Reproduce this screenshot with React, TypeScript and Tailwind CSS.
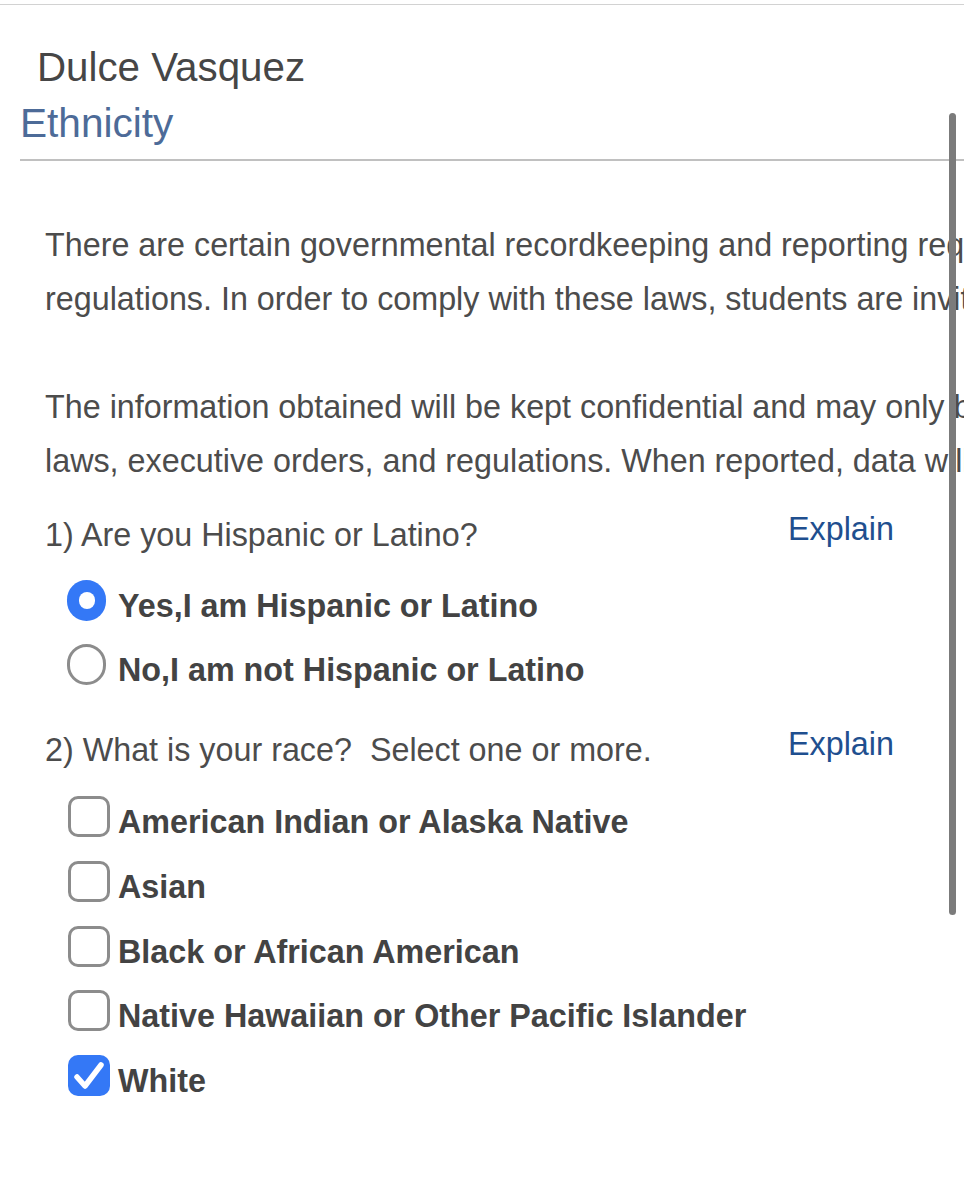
import React from "react";

const font = { fontFamily: '"Liberation Sans", Arial, Helvetica, sans-serif' };

function Radio({ checked }: { checked: boolean }) {
  return checked ? (
    <div className="w-[39px] h-[41px] rounded-full bg-[#3478f6] flex items-center justify-center shrink-0">
      <div className="w-[16px] h-[17px] rounded-full bg-white" />
    </div>
  ) : (
    <div className="w-[39px] h-[41px] rounded-full border-[3px] border-[#8c8c8c] bg-white shrink-0" />
  );
}

function Checkbox({ checked }: { checked: boolean }) {
  return checked ? (
    <div className="w-[42px] h-[41px] rounded-[10px] bg-[#3478f6] flex items-center justify-center shrink-0">
      <svg width="34" height="32" viewBox="0 0 34 32" fill="none">
        <path d="M5 17 L13 26 L29 5" stroke="white" strokeWidth="5.5" strokeLinecap="round" strokeLinejoin="round" />
      </svg>
    </div>
  ) : (
    <div className="w-[42px] h-[41px] rounded-[10px] border-[3px] border-[#8c8c8c] bg-white shrink-0" />
  );
}

export default function App() {
  const races = [
    { label: "American Indian or Alaska Native", checked: false },
    { label: "Asian", checked: false },
    { label: "Black or African American", checked: false },
    { label: "Native Hawaiian or Other Pacific Islander", checked: false },
    { label: "White", checked: true },
  ];
  return (
    <div className="relative w-[964px] h-[1200px] overflow-hidden bg-white" style={font}>
      <div className="mt-[4px] h-px bg-[#d2d2d2]" />
      <div className="mt-[37px] pl-[37px] text-[40.3px] leading-[52px] text-[#464646] whitespace-nowrap">
        Dulce Vasquez
      </div>
      <div className="pl-[20px] text-[40.6px] leading-[58px] text-[#4d6b98] whitespace-nowrap">Ethnicity</div>
      <div className="ml-[20px] mt-[7px] h-[2px] bg-[#c0c0c0]" />

      <div className="pl-[45px]">
        <div className="mt-[57px] text-[32.3px] leading-[54px] text-[#4c4c4c] whitespace-nowrap">
          <div>There are certain governmental recordkeeping and reporting requirements imposed by federal laws and</div>
          <div>regulations. In order to comply with these laws, students are invited to identify their ethnicity and race.</div>
          <div className="h-[54px]" />
          <div>The information obtained will be kept confidential and may only be used in accordance with applicable</div>
          <div>laws, executive orders, and regulations. When reported, data will not identify any specific individual.</div>
        </div>

        <div className="mt-[27px] flex items-start w-[850px] text-[32.3px] leading-[40px]">
          <div className="w-[743px] text-[#4c4c4c] whitespace-nowrap">1) Are you Hispanic or Latino?</div>
          <div className="-mt-[6px] text-[#1f4f8f]">Explain</div>
        </div>

        <div className="mt-[25px]">
          {[
            { label: "Yes,I am Hispanic or Latino", checked: true },
            { label: "No,I am not Hispanic or Latino", checked: false },
          ].map((o) => (
            <div key={o.label} className="flex items-start h-[64px] pl-[22px]">
              <Radio checked={o.checked} />
              <div className="ml-[12px] mt-[6px] text-[32.3px] leading-[40px] font-bold text-[#434343] whitespace-nowrap">
                {o.label}
              </div>
            </div>
          ))}
        </div>

        <div className="mt-[22px] flex items-start w-[850px] text-[32.3px] leading-[40px]">
          <div className="w-[743px] text-[#4c4c4c] whitespace-pre">2) What is your race?  Select one or more.</div>
          <div className="-mt-[6px] text-[#1f4f8f]">Explain</div>
        </div>

        <div className="mt-[26px]">
          {races.map((o) => (
            <div key={o.label} className="flex items-start h-[64.75px] pl-[23px]">
              <Checkbox checked={o.checked} />
              <div className="ml-[8px] mt-[6px] text-[32.3px] leading-[40px] font-bold text-[#434343] whitespace-nowrap">
                {o.label}
              </div>
            </div>
          ))}
        </div>
      </div>

      <div className="absolute left-[949px] top-[113px] w-[7px] h-[802px] rounded-full bg-[#7b7b7b]" />
    </div>
  );
}
